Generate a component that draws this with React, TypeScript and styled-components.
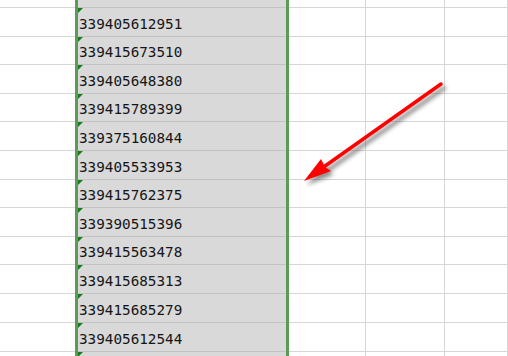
import styled, { createGlobalStyle } from "styled-components";

const GlobalStyle = createGlobalStyle`
  html, body {
    margin: 0;
    padding: 0;
    background: #ffffff;
  }
  #root {
    width: 508px;
    height: 356px;
  }
`;

const rows = [
  { h: 29, value: "339405678388" },
  { h: 29, value: "339405612951" },
  { h: 28, value: "339415673510" },
  { h: 29, value: "339405648380" },
  { h: 28, value: "339415789399" },
  { h: 29, value: "339375160844" },
  { h: 29, value: "339405533953" },
  { h: 28, value: "339415762375" },
  { h: 29, value: "339390515396" },
  { h: 28, value: "339415563478" },
  { h: 29, value: "339415685313" },
  { h: 29, value: "339415685279" },
  { h: 29, value: "339405612544" },
  { h: 29, value: "339415600000" },
];

export default function App() {
  return (
    <>
      <GlobalStyle />
      <Viewport>
        <Sheet>
          {rows.map((r, i) => (
            <Row key={i} $h={r.h}>
              <Cell />
              <SelectedCell>
                <TextFlag />
                <Value>{r.value}</Value>
              </SelectedCell>
              <Cell />
              <Cell />
              <Cell />
            </Row>
          ))}
        </Sheet>
        <Selection />
        <Arrow viewBox="0 0 508 356" width="508" height="356">
          <defs>
            <filter id="shadow" x="-20%" y="-20%" width="140%" height="140%">
              <feGaussianBlur stdDeviation="2" />
            </filter>
          </defs>
          <g transform="translate(3 4)" opacity="0.55" filter="url(#shadow)">
            <line x1="441" y1="84" x2="318" y2="171" stroke="#333" strokeWidth="4" strokeLinecap="round" />
            <polygon points="304,181 321,160 330,171" fill="#333" />
          </g>
          <line x1="441" y1="84" x2="318" y2="171" stroke="#ff0000" strokeWidth="3.5" strokeLinecap="round" />
          <polygon points="304,181 321,159 325,167 331,171" fill="#ff0000" />
        </Arrow>
      </Viewport>
    </>
  );
}

const Viewport = styled.div`
  position: relative;
  width: 508px;
  height: 356px;
  overflow: hidden;
  background: #ffffff;
`;

const Sheet = styled.div`
  margin-top: -21px;
  display: flex;
  flex-direction: column;
`;

const Row = styled.div<{ $h: number }>`
  display: grid;
  grid-template-columns: 76px 211px 79px 79px 1fr;
  height: ${(p) => p.$h}px;
  box-sizing: border-box;
`;

const Cell = styled.div`
  box-sizing: border-box;
  border-right: 1px solid #d6d6d6;
  border-bottom: 1px solid #d6d6d6;
`;

const SelectedCell = styled.div`
  position: relative;
  box-sizing: border-box;
  display: flex;
  align-items: flex-end;
  padding: 0 0 4px 3px;
  background: #d9d9d9;
  border-bottom: 1px solid #c2c2c2;
`;

const TextFlag = styled.span`
  position: absolute;
  left: 2px;
  top: 0;
  width: 0;
  height: 0;
  border-top: 5px solid #1b7a1b;
  border-right: 5px solid transparent;
`;

const Value = styled.span`
  font-family: "DejaVu Sans Mono", "Liberation Mono", monospace;
  font-size: 14.3px;
  line-height: 16px;
  color: #151515;
`;

const Selection = styled.div`
  position: absolute;
  left: 75px;
  top: -10px;
  width: 214px;
  height: 380px;
  box-sizing: border-box;
  border-left: 3px solid #5b9b57;
  border-right: 3px solid #5b9b57;
  pointer-events: none;
`;

const Arrow = styled.svg`
  position: absolute;
  left: 0;
  top: 0;
  pointer-events: none;
`;
